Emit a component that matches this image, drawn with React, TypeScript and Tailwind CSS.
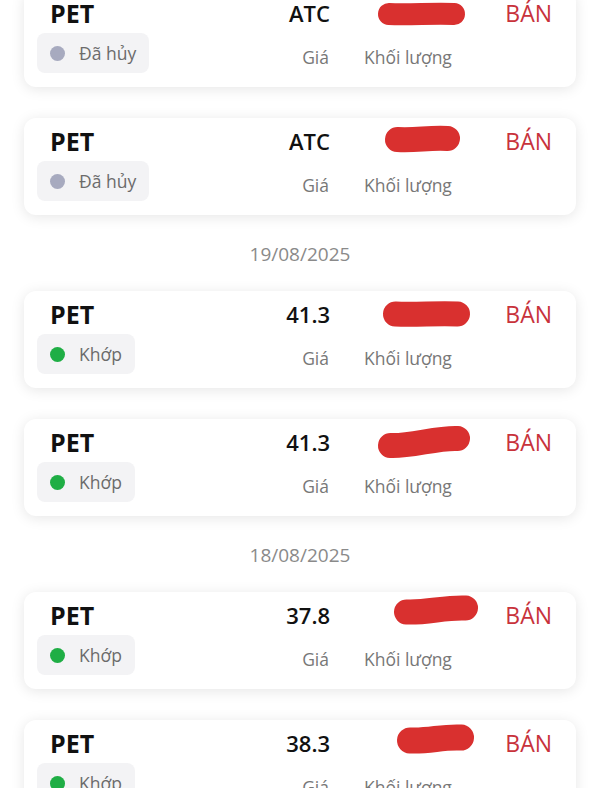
import React from "react";

type Blob = { x: number; w: number; dy: number; tilt: number; h: number };

type Order = {
  price: string;
  status: "cancel" | "match";
  blob: Blob;
};

type Item = { kind: "date"; label: string } | { kind: "card"; order: Order };

const items: Item[] = [
  { kind: "card", order: { price: "ATC", status: "cancel", blob: { x: 14, w: 87, dy: 1, tilt: 0, h: 22 } } },
  { kind: "card", order: { price: "ATC", status: "cancel", blob: { x: 21, w: 75, dy: -2, tilt: -1, h: 25 } } },
  { kind: "date", label: "19/08/2025" },
  { kind: "card", order: { price: "41.3", status: "match", blob: { x: 19, w: 87, dy: 0, tilt: 0, h: 25 } } },
  { kind: "card", order: { price: "41.3", status: "match", blob: { x: 14, w: 92, dy: 0, tilt: -7, h: 25 } } },
  { kind: "date", label: "18/08/2025" },
  { kind: "card", order: { price: "37.8", status: "match", blob: { x: 30, w: 84, dy: -5, tilt: -4, h: 25 } } },
  { kind: "card", order: { price: "38.3", status: "match", blob: { x: 33, w: 77, dy: -4, tilt: -3, h: 26 } } },
];

function Redaction({ blob }: { blob: Blob }) {
  const r = blob.h / 2;
  const x1 = blob.x + r;
  const x2 = blob.x + blob.w - r;
  const cy = 20 + blob.dy;
  return (
    <svg
      width="150"
      height="40"
      viewBox="0 0 150 40"
      className="absolute left-0 top-[-6px]"
    >
      <path
        d={`M ${x1} ${cy - blob.tilt / 2} C ${x1 + 20} ${cy - blob.tilt / 2 + 1}, ${x2 - 20} ${cy + blob.tilt / 2 - 1}, ${x2} ${cy + blob.tilt / 2}`}
        stroke="#d9302f"
        strokeWidth={blob.h}
        strokeLinecap="round"
        fill="none"
      />
    </svg>
  );
}

function Card({ order }: { order: Order }) {
  const cancel = order.status === "cancel";
  return (
    <div className="h-[97px] rounded-[12px] bg-white pl-[13px] pr-[24px] pt-[9px] shadow-[0_2px_14px_rgba(0,0,0,0.1)]">
      <div className="flex h-[28px] items-center">
        <div className="flex w-[293px] items-center justify-between">
          <span className="pl-[13px] text-[25px] font-bold leading-[28px] text-[#111]">PET</span>
          <span className="text-[22px] font-semibold leading-[28px] text-[#111]">{order.price}</span>
        </div>
        <div className="relative ml-[34px] h-[28px] w-[141px]">
          <Redaction blob={order.blob} />
        </div>
        <span className="ml-auto text-[23px] leading-[28px] text-[#c8323b]">BÁN</span>
      </div>
      <div className="mt-[6px] flex h-[40px] items-center">
        <div className="flex w-[293px] items-center justify-between">
          <div className="flex h-[40px] items-center gap-[14px] rounded-[8px] bg-[#f3f3f5] px-[13px]">
            <span
              className={
                cancel
                  ? "h-[15px] w-[15px] rounded-full bg-[#a7aabf]"
                  : "h-[15px] w-[15px] rounded-full bg-[#1fae45]"
              }
            />
            <span className="text-[17.5px] leading-[24px] text-[#6b6b6b]">{cancel ? "Đã hủy" : "Khớp"}</span>
          </div>
          <span className="mr-[1px] mt-[7px] text-[17.5px] leading-[24px] text-[#777]">Giá</span>
        </div>
        <span className="ml-[34px] mt-[7px] text-[17.5px] leading-[24px] text-[#777]">Khối lượng</span>
      </div>
    </div>
  );
}

export default function App() {
  return (
    <div className="flex h-[800px] w-full flex-col overflow-hidden bg-white" style={{ fontFamily: "'Open Sans', 'Noto Sans', sans-serif" }}>
      <div className="h-[788px] overflow-hidden px-[24px]">
        <div className="-mt-[10px] flex flex-col">
          {items.map((it, i) => {
            if (it.kind === "date") {
              return (
                <div key={i} className="mb-[25px] mt-[27px] h-[24px] text-center text-[19px] leading-[24px] text-[#8a8a8a]">
                  {it.label}
                </div>
              );
            }
            const prev = items[i - 1];
            const gap = prev && prev.kind === "card";
            return (
              <div key={i} className={gap ? "mt-[31px]" : ""}>
                <Card order={it.order} />
              </div>
            );
          })}
        </div>
      </div>
      <div className="h-[12px] bg-white" />
    </div>
  );
}
